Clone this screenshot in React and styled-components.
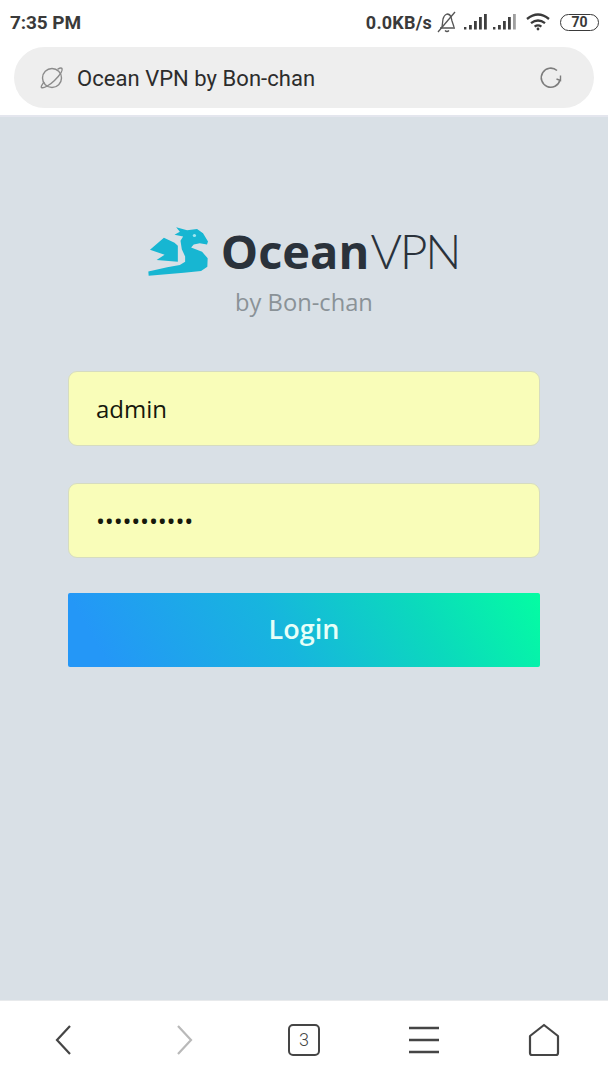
import React from "react";
import styled, { createGlobalStyle } from "styled-components";

const Global = createGlobalStyle`
  html, body { margin: 0; padding: 0; background: #fff; }
  * { box-sizing: border-box; }
`;

const Screen = styled.div`
  width: 608px;
  height: 1080px;
  display: flex;
  flex-direction: column;
  overflow: hidden;
  font-family: "Open Sans", sans-serif;
`;

const StatusBar = styled.div`
  height: 44px;
  flex: none;
  background: #fff;
  display: flex;
  align-items: center;
  justify-content: space-between;
  padding: 0 9px 0 10px;
  font-family: Roboto, sans-serif;
  font-weight: 700;
  font-size: 18px;
  color: #3a3a3a;
`;

const Clock = styled.span`
  font-size: 19px;
  letter-spacing: -0.1px;
`;

const StatusRight = styled.div`
  display: flex;
  align-items: center;
`;

const Speed = styled.span`
  margin-right: 5px;
  letter-spacing: 0.2px;
`;

const Gap = styled.span`
  width: ${(p) => p.$w}px;
`;

const Battery = styled.div`
  width: 39px;
  height: 17px;
  border: 1.5px solid #3a3a3a;
  border-radius: 9px;
  margin-left: 10px;
  display: flex;
  align-items: center;
  justify-content: center;
  font-size: 14px;
  line-height: 1;
`;

const Chrome = styled.div`
  flex: none;
  height: 73px;
  background: #fff;
  padding: 3px 14px 0;
  border-bottom: 2px solid #e4e6ee;
`;

const AddressBar = styled.div`
  height: 61px;
  border-radius: 31px;
  background: #eeeeee;
  display: flex;
  align-items: center;
  padding: 0 31px 0 25px;
  font-family: Roboto, sans-serif;
  font-size: 22px;
  color: #2c2c2c;
`;

const AddressText = styled.span`
  flex: 1;
  margin-left: 12px;
  padding-top: 2px;
  letter-spacing: 0.04px;
`;

const Content = styled.main`
  flex: 1;
  background: #d9e0e6;
  display: flex;
  flex-direction: column;
  padding: 99px 68px 0;
`;

const Brand = styled.div`
  display: flex;
  align-items: center;
  justify-content: center;
  height: 70px;
  padding-right: 1px;
`;

const Wordmark = styled.div`
  margin-left: 12px;
  font-size: 47px;
  line-height: 1;
  color: #2a323b;
  white-space: nowrap;
`;

const Strong = styled.span`
  font-weight: 700;
`;

const Thin = styled.span`
  font-weight: 300;
  font-family: Lato, sans-serif;
  font-size: 48px;
  letter-spacing: -2.2px;
  margin-left: 1px;
`;

const Byline = styled.div`
  text-align: center;
  font-size: 23.7px;
  line-height: 32px;
  color: #8a9297;
  margin-bottom: 53px;
`;

const Field = styled.input`
  display: block;
  width: 472px;
  height: 75px;
  margin: 0 0 37px;
  padding: 0 27px;
  border: 1px solid #d6dcc0;
  border-radius: 9px;
  background: #f9fdb9;
  color: #16180c;
  font-family: "Open Sans", sans-serif;
  font-size: 24px;
  outline: none;
  letter-spacing: ${(p) => (p.type === "password" ? "-0.2px" : "0")};
`;

const Login = styled.button`
  display: block;
  width: 472px;
  height: 74px;
  margin-top: -2px;
  padding: 0 0 3px;
  border: none;
  border-radius: 2px;
  background: linear-gradient(60deg, #2497f7 8%, #17b5de 45%, #0bd9bd 74%, #04fda2 100%);
  color: #e6fff8;
  font-family: "Open Sans", sans-serif;
  font-size: 27px;
  font-weight: 600;
`;

const BottomNav = styled.nav`
  height: 80px;
  flex: none;
  background: #fff;
  border-top: 1px solid #e8eaec;
  display: grid;
  grid-template-columns: repeat(5, 120px);
  padding: 0 0 2px 4px;
  align-items: center;
  justify-items: center;
`;

const TabCount = styled.div`
  width: 32px;
  height: 32px;
  border: 2px solid #454545;
  border-radius: 5px;
  display: flex;
  align-items: center;
  justify-content: center;
  font-family: Roboto, sans-serif;
  font-size: 18px;
  font-weight: 300;
  color: #454545;
`;

const Bell = () => (
  <svg width="20" height="22" viewBox="0 0 20 22" fill="none" stroke="#555" strokeWidth="1.3">
    <path d="M3 17h15M5 16l1-8q1-4 4-5 3 0 4 3l1 4 2 6" />
    <path d="M8 19.5q2 2 4 0" />
    <path d="M1 21 18 1" />
  </svg>
);

const Signal = ({ last = 1 }) => (
  <svg width="24" height="16" viewBox="0 0 24 16" fill="#3f3f3f">
    <rect x="0" y="13" width="2.4" height="2.5" />
    <rect x="5" y="11" width="2.8" height="4.5" />
    <rect x="10" y="7" width="2.8" height="8.5" />
    <rect x="15" y="3" width="2.8" height="12.5" />
    <rect x="20" y="0" width="2.8" height="15.5" opacity={last} />
  </svg>
);

const Wifi = () => (
  <svg width="24" height="18" viewBox="0 0 24 18" fill="none" stroke="#3a3a3a" strokeWidth="2.3">
    <path d="M1 6q11-9 22 0" />
    <path d="M5 10.2q7-5.5 14 0" />
    <path d="M8.6 13.6q3.4-2.4 6.8 0" />
    <circle cx="12" cy="16" r="1.4" fill="#3a3a3a" stroke="none" />
  </svg>
);

const Planet = () => (
  <svg width="26" height="24" viewBox="0 0 26 24" fill="none" stroke="#8b8b8b" strokeWidth="1.4">
    <circle cx="13" cy="12" r="9.5" />
    <path d="M5 16C3 19 1.500 21 2.500 21.500c2 1 8-2 13-7s8.500-10 7.500-12c-.6-.8-2.500-.4-4.500.8" />
  </svg>
);

const Reload = () => (
  <svg width="24" height="24" viewBox="0 0 24 24" fill="none" stroke="#7d7d7d" strokeWidth="1.6">
    <path d="M21 14a9.500 9.500 0 1 1-3-9.500" />
    <path d="M21.500 9.500v5l-4-1.500" strokeWidth="1.400" />
  </svg>
);

const Dragon = () => (
  <svg width="61" height="49" viewBox="12 14 184 163" preserveAspectRatio="none" fill="#17b6d2">
    <path d="M97 15 130 25 160 21 178 35 193 62 190 72 168 68 150 72 142 82 175 96 192 118 191 146 172 160 120 166 14 176 13 162 70 148 108 140 124 130 124 112 114 88 110 60 118 46 92 40 108 30Z" />
    <path d="M18 90 60 50 92 66 102 76 102 130 38 124 62 106Z" />
    <circle cx="152" cy="42" r="5" fill="#9fe6f0" />
  </svg>
);

const Chevron = ({ d, color }) => (
  <svg width="20" height="32" viewBox="0 0 20 32" fill="none" stroke={color} strokeWidth="2.200">
    <path d={d} />
  </svg>
);

const Lines = () => (
  <svg width="32" height="30" viewBox="0 0 32 30" fill="none" stroke="#454545" strokeWidth="2.400">
    <path d="M1 3h30M1 15h30M1 27h30" />
  </svg>
);

const Home = () => (
  <svg width="32" height="34" viewBox="0 0 32 34" fill="none" stroke="#454545" strokeWidth="2.200" strokeLinejoin="round">
    <path d="M16 2 30 13v17q0 2-2 2H4q-2 0-2-2V13Z" />
  </svg>
);

export default function App() {
  return (
    <Screen>
      <Global />
      <StatusBar>
        <Clock>7:35 PM</Clock>
        <StatusRight>
          <Speed>0.0KB/s</Speed>
          <Bell />
          <Gap $w={7} />
          <Signal />
          <Gap $w={5} />
          <Signal last={0.5} />
          <Gap $w={9} />
          <Wifi />
          <Battery>70</Battery>
        </StatusRight>
      </StatusBar>
      <Chrome>
        <AddressBar>
          <Planet />
          <AddressText>Ocean VPN by Bon-chan</AddressText>
          <Reload />
        </AddressBar>
      </Chrome>
      <Content>
        <Brand>
          <Dragon />
          <Wordmark>
            <Strong>Ocean</Strong>
            <Thin>VPN</Thin>
          </Wordmark>
        </Brand>
        <Byline>by Bon-chan</Byline>
        <Field type="text" defaultValue="admin" readOnly />
        <Field type="password" defaultValue="12345678901" readOnly />
        <Login>Login</Login>
      </Content>
      <BottomNav>
        <Chevron d="M16 2 3 16l13 14" color="#454545" />
        <Chevron d="M4 2l13 14L4 30" color="#b9b9b9" />
        <TabCount>3</TabCount>
        <Lines />
        <Home />
      </BottomNav>
    </Screen>
  );
}
